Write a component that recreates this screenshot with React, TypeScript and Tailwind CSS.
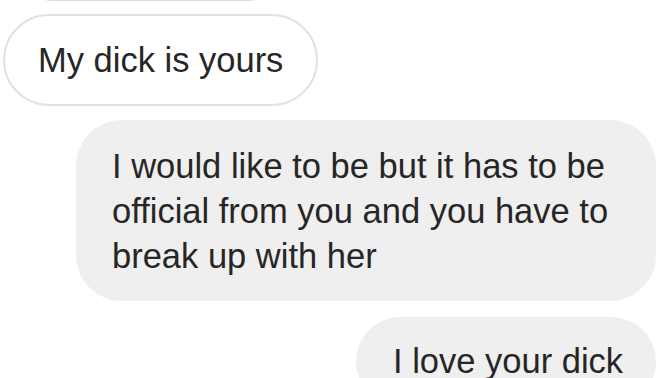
export default function App() {
    return (
        <div className="flex h-[378px] w-[672px] flex-col overflow-hidden bg-white font-['Liberation_Sans',Arial,sans-serif] text-[#262626]">
            {/* previous message, only its bottom edge is in view */}
            <div className="-mt-[59px] ml-[22px] h-[60px] w-[256px] shrink-0 rounded-full border border-[#dbdbdb]" />

            {/* incoming */}
            <div className="ml-[3px] mt-[13px] flex h-[92px] w-[315px] shrink-0 items-center rounded-full border-2 border-[#e2e2e2] pl-[33px]">
                <span className="whitespace-nowrap text-[34.5px] leading-none">My dick is yours</span>
            </div>

            {/* outgoing */}
            <div className="mr-[16px] mt-[14px] w-[580px] shrink-0 self-end rounded-[46px] bg-[#efefef] pb-[22px] pl-[36px] pt-[24px] text-[34.5px] leading-[45px]">
                <div className="whitespace-nowrap">I would like to be but it has to be</div>
                <div className="whitespace-nowrap">official from you and you have to</div>
                <div className="whitespace-nowrap">break up with her</div>
            </div>

            <div className="mr-[16px] mt-[16px] w-[300px] shrink-0 self-end rounded-[46px] bg-[#efefef] pb-[22px] pl-[37px] pt-[22px] text-[34.5px] leading-[45px]">
                <div className="whitespace-nowrap">I love your dick</div>
            </div>
        </div>
    );
}
